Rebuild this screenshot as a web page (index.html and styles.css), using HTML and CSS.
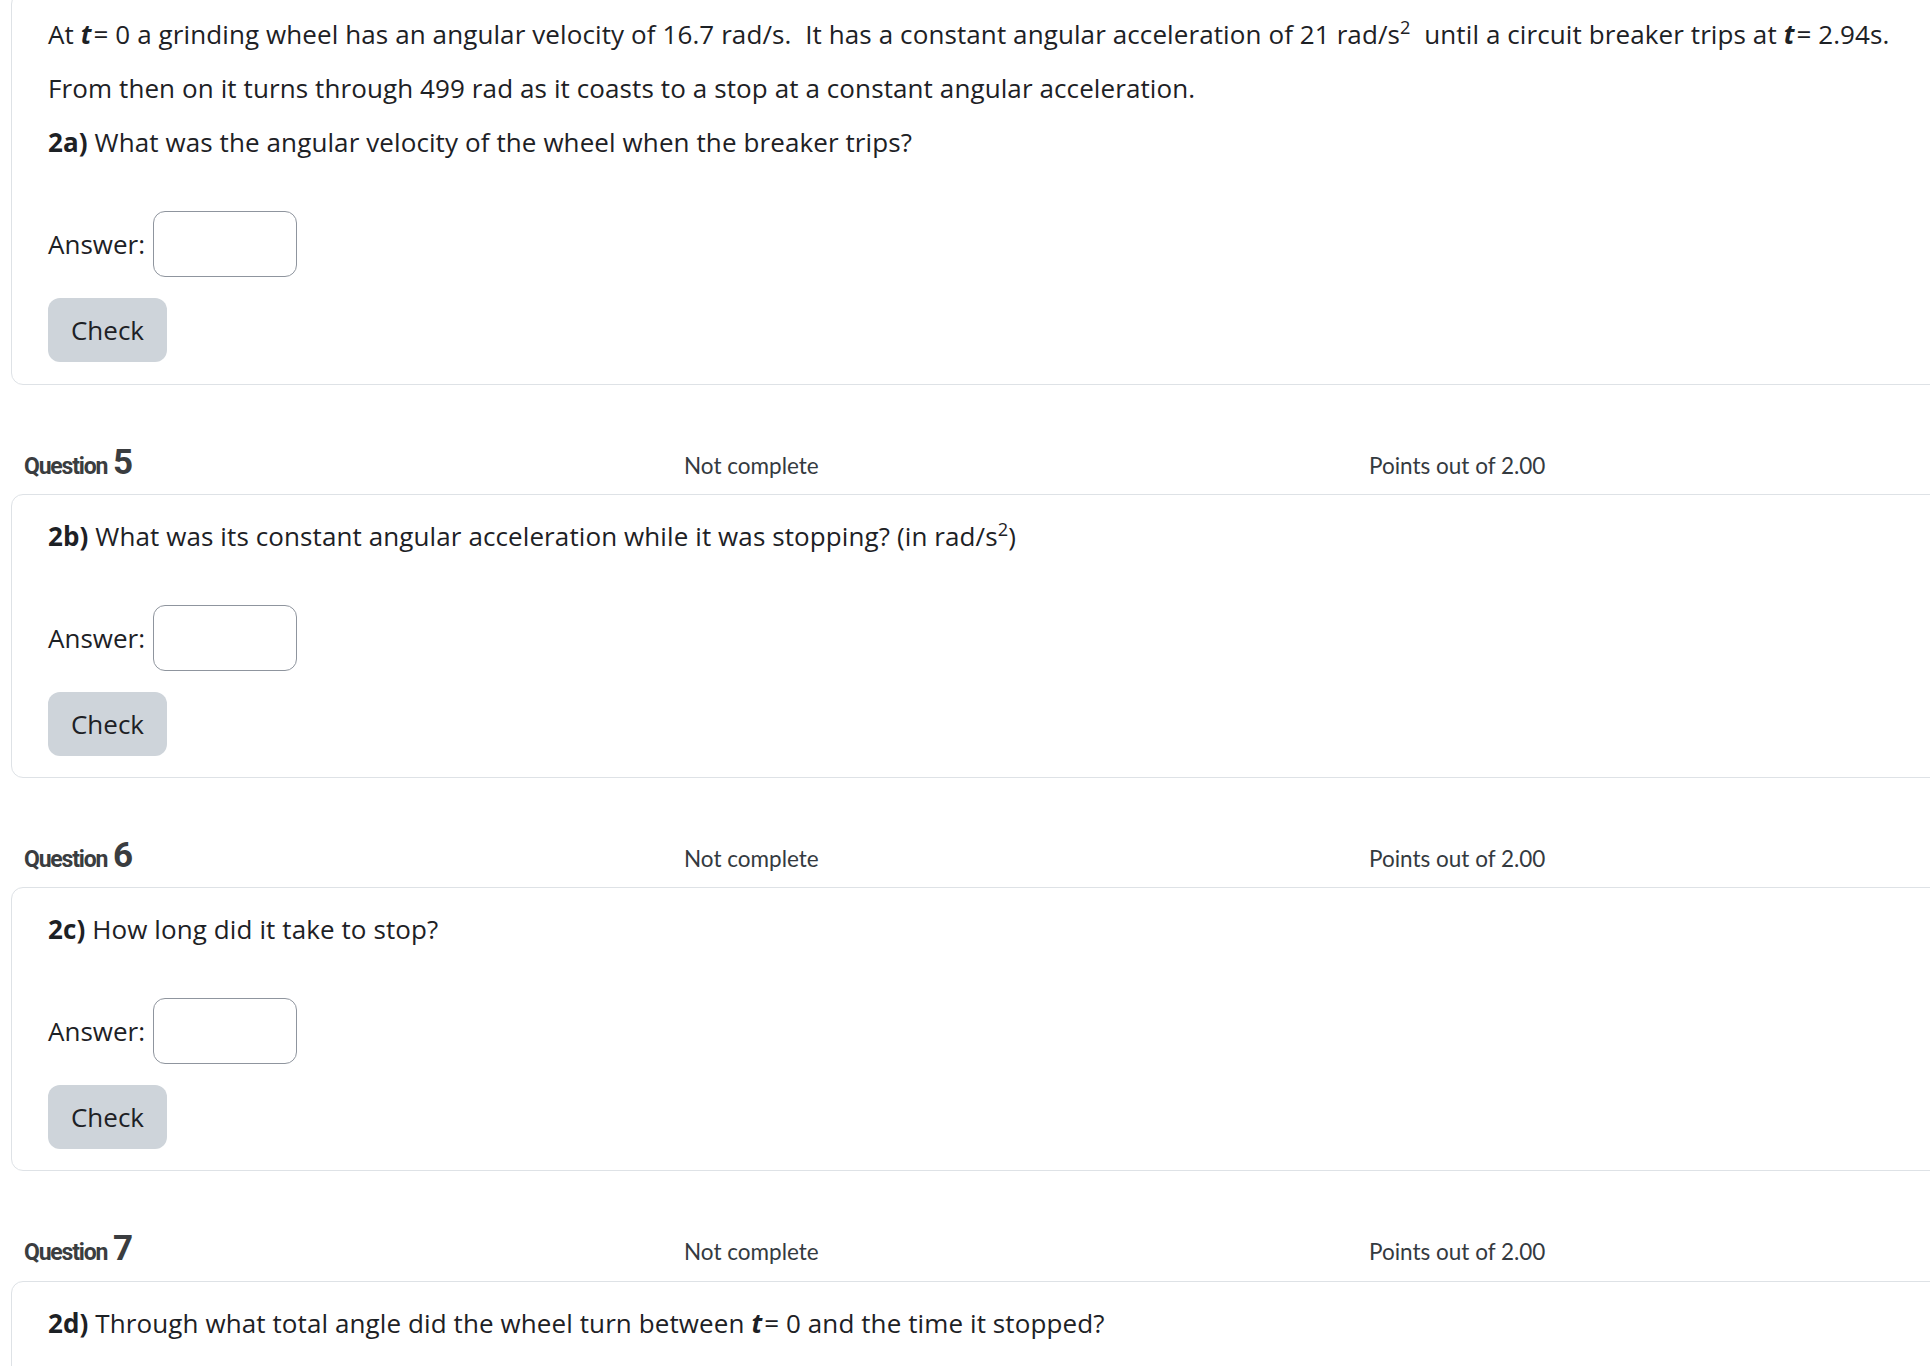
FILE: index.html
```html
<!DOCTYPE html>
<html lang="en">
<head>
<meta charset="utf-8">
<title>Quiz</title>
<link rel="stylesheet" href="styles.css">
</head>
<body>
<div class="page">
  <div class="card card-first">
    <p class="qline">At <i class="v">t</i>= 0 a grinding wheel has an angular velocity of 16.7 rad/s.&nbsp; It has a constant angular acceleration of 21 rad/s<sup>2</sup>&nbsp; until a circuit breaker trips at <i class="v">t</i>= 2.94s.</p>
    <p class="qline">From then on it turns through 499 rad as it coasts to a stop at a constant angular acceleration.</p>
    <p class="qline"><b>2a)</b> What was the angular velocity of the wheel when the breaker trips?</p>
    <div class="answer"><span class="label">Answer:</span><span class="input"></span></div>
    <div class="actions"><span class="btn">Check</span></div>
  </div>

  <div class="qhead">
    <div class="qno"><span class="qword">Question</span> <span class="qnum">5</span></div>
    <div class="qstate">Not complete</div>
    <div class="qgrade">Points out of 2.00</div>
  </div>
  <div class="card">
    <p class="qline"><b>2b)</b> What was its constant angular acceleration while it was stopping? (in rad/s<sup>2</sup>)</p>
    <div class="answer"><span class="label">Answer:</span><span class="input"></span></div>
    <div class="actions"><span class="btn">Check</span></div>
  </div>

  <div class="qhead">
    <div class="qno"><span class="qword">Question</span> <span class="qnum">6</span></div>
    <div class="qstate">Not complete</div>
    <div class="qgrade">Points out of 2.00</div>
  </div>
  <div class="card">
    <p class="qline"><b>2c)</b> How long did it take to stop?</p>
    <div class="answer"><span class="label">Answer:</span><span class="input"></span></div>
    <div class="actions"><span class="btn">Check</span></div>
  </div>

  <div class="qhead">
    <div class="qno"><span class="qword">Question</span> <span class="qnum">7</span></div>
    <div class="qstate">Not complete</div>
    <div class="qgrade">Points out of 2.00</div>
  </div>
  <div class="card">
    <p class="qline"><b>2d)</b> Through what total angle did the wheel turn between <i class="v">t</i>= 0 and the time it stopped?</p>
    <div class="answer"><span class="label">Answer:</span><span class="input"></span></div>
    <div class="actions"><span class="btn">Check</span></div>
  </div>
</div>
</body>
</html>
```

FILE: styles.css
```css
html, body {
  margin: 0;
  padding: 0;
  overflow: hidden;
  background: #ffffff;
}
body {
  font-family: "Open Sans", sans-serif;
  color: #1d2125;
}
.page {
  width: 2060px;
  margin-top: -8px;
  padding-left: 11px;
}
.card {
  border: 1px solid #dee2e6;
  border-radius: 12px;
  padding: 21px 36px 21px 36px;
  background: #fff;
}
.card-first {
  padding-bottom: 22px;
}
.qline {
  margin: 0 0 14px 0;
  font-size: 26px;
  line-height: 40px;
  letter-spacing: 0.1px;
  white-space: nowrap;
}
.qline:last-of-type {
  margin-bottom: 49px;
}
.qline b {
  font-weight: 700;
}
.qline sup {
  font-size: 0.7em;
  line-height: 0;
  vertical-align: 0.55em;
}
.v {
  font-weight: 700;
  font-style: italic;
  margin-right: 2px;
}
.answer {
  display: flex;
  align-items: center;
  gap: 8px;
  font-family: "Open Sans", sans-serif;
  font-size: 26px;
}
.input {
  display: block;
  box-sizing: border-box;
  width: 144px;
  height: 66px;
  border: 1px solid #8f959e;
  border-radius: 12px;
  background: #fff;
}
.actions {
  margin-top: 21px;
  display: flex;
}
.btn {
  display: flex;
  align-items: center;
  justify-content: center;
  box-sizing: border-box;
  width: 119px;
  height: 64px;
  border-radius: 12px;
  background: #ced4da;
  color: #1d2125;
  font-family: "Open Sans", sans-serif;
  font-size: 26px;
}
.qhead {
  box-sizing: border-box;
  height: 109.5px;
  padding: 60px 0 13px 13px;
  display: grid;
  grid-template-columns: 660px 685px auto;
  align-items: baseline;
  line-height: 36px;
}
.card-first + .qhead {
  height: 108.5px;
}
.qno {
  font-family: Roboto, sans-serif;
  font-weight: 700;
  color: #3a3d40;
  white-space: nowrap;
}
.qword {
  font-size: 23px;
  letter-spacing: -1.2px;
}
.qnum {
  font-size: 35px;
  letter-spacing: -1px;
  margin-left: 2px;
}
.qstate, .qgrade {
  font-family: Lato, sans-serif;
  font-size: 22.5px;
  color: #343a40;
}
```
